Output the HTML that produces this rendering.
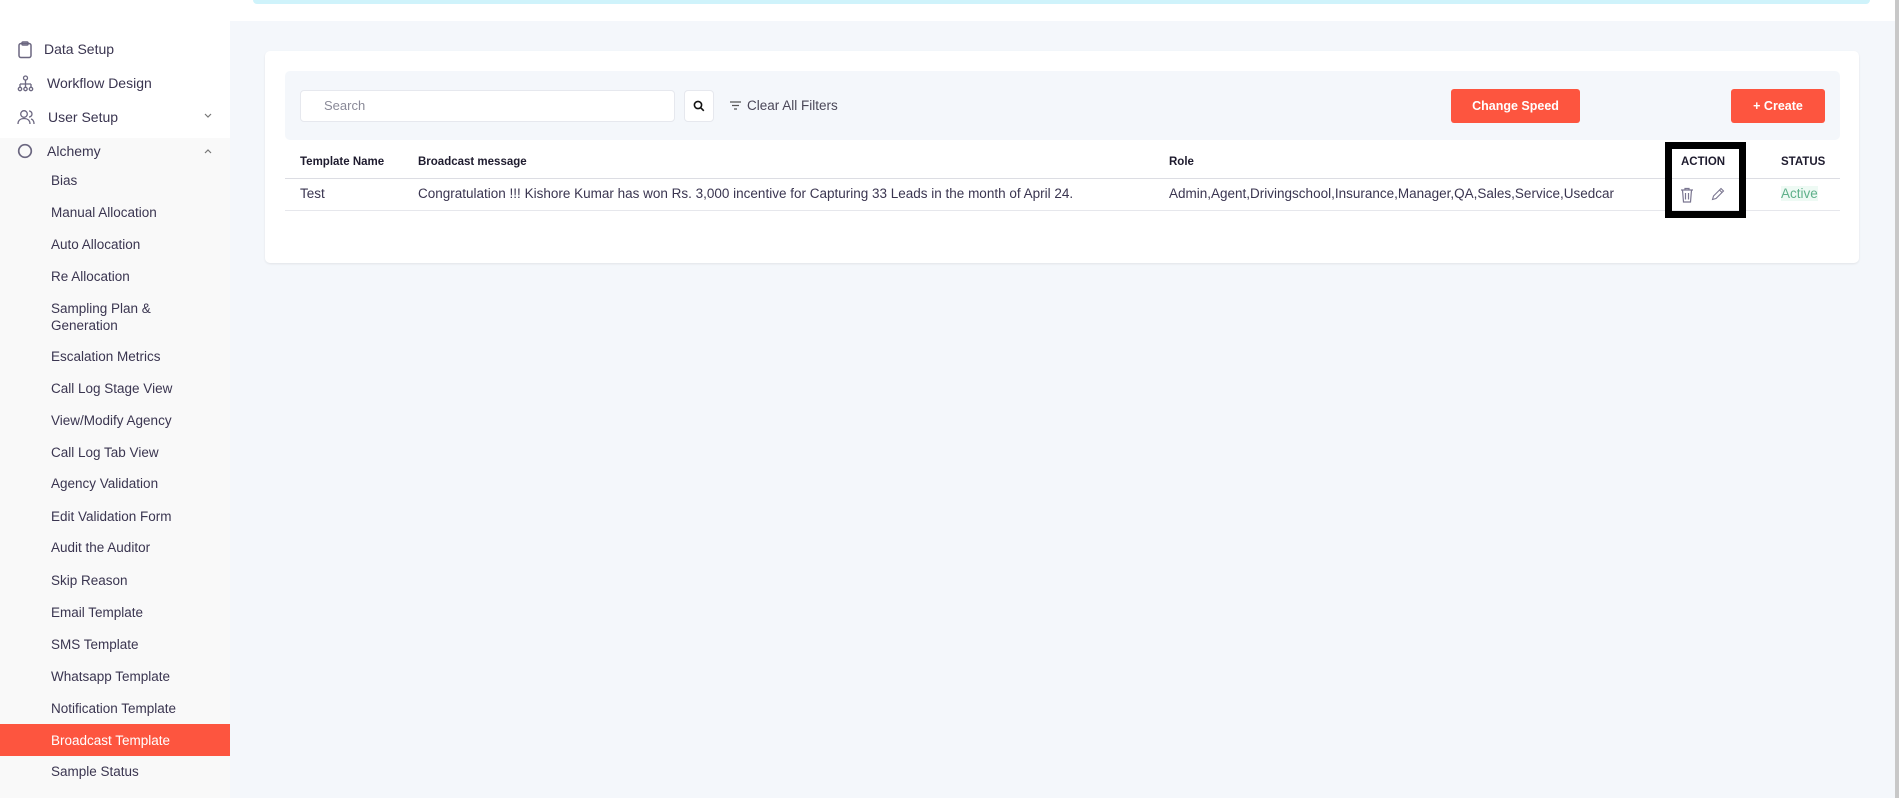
<!DOCTYPE html>
<html><head><meta charset="utf-8"><style>
*{box-sizing:border-box;margin:0;padding:0}
body{width:1899px;height:798px;overflow:hidden;background:#f4f7fb;font-family:"Liberation Sans",sans-serif;color:#2e2a3f;position:relative}
.abs{position:absolute;white-space:nowrap}
#side{position:absolute;left:0;top:0;width:230px;height:798px;background:#fff}
#alc{position:absolute;left:0;top:138px;width:230px;height:660px;background:#f9f9f9}
.top{font-size:14px;color:#3a3550}
.sub{position:absolute;left:51px;font-size:13.5px;color:#3a3550;white-space:nowrap;line-height:16px;margin-top:1px}
.th{font-size:11.5px;font-weight:bold;color:#1e1b2e}
.td{font-size:13.5px;color:#3a3550}
</style></head><body>
<div class="abs" style="left:230px;top:0;width:1669px;height:21px;background:#fff"></div>
<div class="abs" style="left:253px;top:0;width:1617px;height:4px;background:#cff3fb;border-radius:0 0 8px 8px"></div>
<div class="abs" style="left:1895px;top:0;width:4px;height:798px;background:#c8c8c8"></div>

<div id="side"></div>
<div id="alc"></div>
<svg class="abs" style="left:17px;top:41px" width="16" height="18" viewBox="0 0 16 18" fill="none" stroke="#6b6780" stroke-width="1.5"><rect x="2" y="2.5" width="12" height="14" rx="2"/><rect x="5" y="1" width="6" height="3" rx="1"/></svg>
<div class="abs top" style="left:44px;top:41px">Data Setup</div>
<svg class="abs" style="left:17px;top:75px" width="17" height="17" viewBox="0 0 17 17" fill="none" stroke="#6b6780" stroke-width="1.3"><circle cx="8.5" cy="3" r="2"/><path d="M8.5 5v4M3 9h11M3 9v3M8.5 9v3M14 9v3"/><circle cx="3" cy="14" r="1.7"/><circle cx="8.5" cy="14" r="1.7"/><circle cx="14" cy="14" r="1.7"/></svg>
<div class="abs top" style="left:47px;top:75px">Workflow Design</div>
<svg class="abs" style="left:17px;top:109px" width="18" height="16" viewBox="0 0 18 16" fill="none" stroke="#6b6780" stroke-width="1.3"><circle cx="7" cy="5" r="3.3"/><path d="M1 15c0-4 3-5.5 6-5.5s6 1.5 6 5.5M12 2a3 3 0 0 1 0 6M14 10c2 .5 3 2 3 5"/></svg>
<div class="abs top" style="left:48px;top:109px">User Setup</div>
<svg class="abs" style="left:204px;top:113px" width="8" height="6" viewBox="0 0 8 6" fill="none" stroke="#777" stroke-width="1.2"><path d="M1 1l3 3 3-3"/></svg>
<svg class="abs" style="left:17px;top:143px" width="16" height="16" viewBox="0 0 16 16" fill="none" stroke="#6b6780" stroke-width="1.7"><circle cx="8" cy="8" r="6.3"/></svg>
<div class="abs top" style="left:47px;top:143px">Alchemy</div>
<svg class="abs" style="left:204px;top:148px" width="8" height="6" viewBox="0 0 8 6" fill="none" stroke="#777" stroke-width="1.2"><path d="M1 5l3-3 3 3"/></svg>

<div class="sub" style="top:172px">Bias</div>
<div class="sub" style="top:204px">Manual Allocation</div>
<div class="sub" style="top:236px">Auto Allocation</div>
<div class="sub" style="top:268px">Re Allocation</div>
<div class="sub" style="top:300px">Sampling Plan &amp;</div>
<div class="sub" style="top:317px">Generation</div>
<div class="sub" style="top:348px">Escalation Metrics</div>
<div class="sub" style="top:380px">Call Log Stage View</div>
<div class="sub" style="top:412px">View/Modify Agency</div>
<div class="sub" style="top:444px">Call Log Tab View</div>
<div class="sub" style="top:475px">Agency Validation</div>
<div class="sub" style="top:508px">Edit Validation Form</div>
<div class="sub" style="top:539px">Audit the Auditor</div>
<div class="sub" style="top:572px">Skip Reason</div>
<div class="sub" style="top:604px">Email Template</div>
<div class="sub" style="top:636px">SMS Template</div>
<div class="sub" style="top:668px">Whatsapp Template</div>
<div class="sub" style="top:700px">Notification Template</div>
<div class="abs" style="left:0;top:724px;width:230px;height:32px;background:#fd553f"></div>
<div class="sub" style="top:732px;color:#fff">Broadcast Template</div>
<div class="sub" style="top:763px">Sample Status</div>

<div class="abs" style="left:265px;top:51px;width:1594px;height:212px;background:#fff;border-radius:5px;box-shadow:0 1px 2px rgba(0,0,0,.08)"></div>
<div class="abs" style="left:285px;top:71px;width:1555px;height:69px;background:#f4f7fb;border-radius:5px"></div>
<div class="abs" style="left:300px;top:90px;width:375px;height:32px;background:#fff;border:1px solid #e6e8ee;border-radius:4px"></div>
<div class="abs" style="left:324px;top:98px;font-size:13px;color:#8a8a98">Search</div>
<div class="abs" style="left:684px;top:90px;width:30px;height:32px;background:#fff;border:1px solid #e6e8ee;border-radius:4px"></div>
<svg class="abs" style="left:693px;top:100px" width="12" height="12" viewBox="0 0 12 12" fill="none" stroke="#111" stroke-width="1.6"><circle cx="5" cy="5" r="3.6"/><path d="M7.7 7.7L10.8 10.8"/></svg>
<svg class="abs" style="left:730px;top:101px" width="11" height="9" viewBox="0 0 11 9" fill="none" stroke="#555" stroke-width="1.2"><path d="M0 1h11M2 4.5h7M4 8h3"/></svg>
<div class="abs" style="left:747px;top:98px;font-size:13.5px;color:#4a4758">Clear All Filters</div>
<div class="abs" style="left:1451px;top:89px;width:129px;height:34px;background:#fd553f;border-radius:3px;color:#fff;font-size:12.5px;font-weight:bold;text-align:center;line-height:34px">Change Speed</div>
<div class="abs" style="left:1731px;top:89px;width:94px;height:34px;background:#fd553f;border-radius:3px;color:#fff;font-size:12.5px;font-weight:bold;text-align:center;line-height:34px">+ Create</div>

<div class="abs th" style="left:300px;top:156px">Template Name</div>
<div class="abs th" style="left:418px;top:156px">Broadcast message</div>
<div class="abs th" style="left:1169px;top:156px">Role</div>
<div class="abs th" style="left:1681px;top:156px">ACTION</div>
<div class="abs th" style="left:1781px;top:156px">STATUS</div>
<div class="abs" style="left:285px;top:178px;width:1555px;height:1px;background:#dcdde3"></div>
<div class="abs td" style="left:300px;top:186px">Test</div>
<div class="abs td" style="left:418px;top:186px">Congratulation !!! Kishore Kumar has won Rs. 3,000 incentive for Capturing 33 Leads in the month of April 24.</div>
<div class="abs td" style="left:1169px;top:186px">Admin,Agent,Drivingschool,Insurance,Manager,QA,Sales,Service,Usedcar</div>
<div class="abs td" style="left:1781px;top:186px;color:#5fb08a;background:#eefaf4">Active</div>
<div class="abs" style="left:285px;top:210px;width:1555px;height:1px;background:#e6e7ec"></div>
<svg class="abs" style="left:1680px;top:187px" width="14" height="16" viewBox="0 0 14 16" fill="none" stroke="#7a7690" stroke-width="1.2"><path d="M1 3h12M5 3V1.5h4V3M2.5 3l1 12h7l1-12M5.5 6v6.5M8.5 6v6.5"/></svg>
<svg class="abs" style="left:1711px;top:187px" width="14" height="14" viewBox="0 0 14 14" fill="none" stroke="#7a7690" stroke-width="1.1"><path d="M1.5 12.5l1-3.5 7.5-7.5 2.5 2.5-7.5 7.5zM8.5 3l2.5 2.5"/></svg>
<div class="abs" style="left:1665px;top:142px;width:81px;height:76px;border:7px solid #000"></div>
</body></html>
